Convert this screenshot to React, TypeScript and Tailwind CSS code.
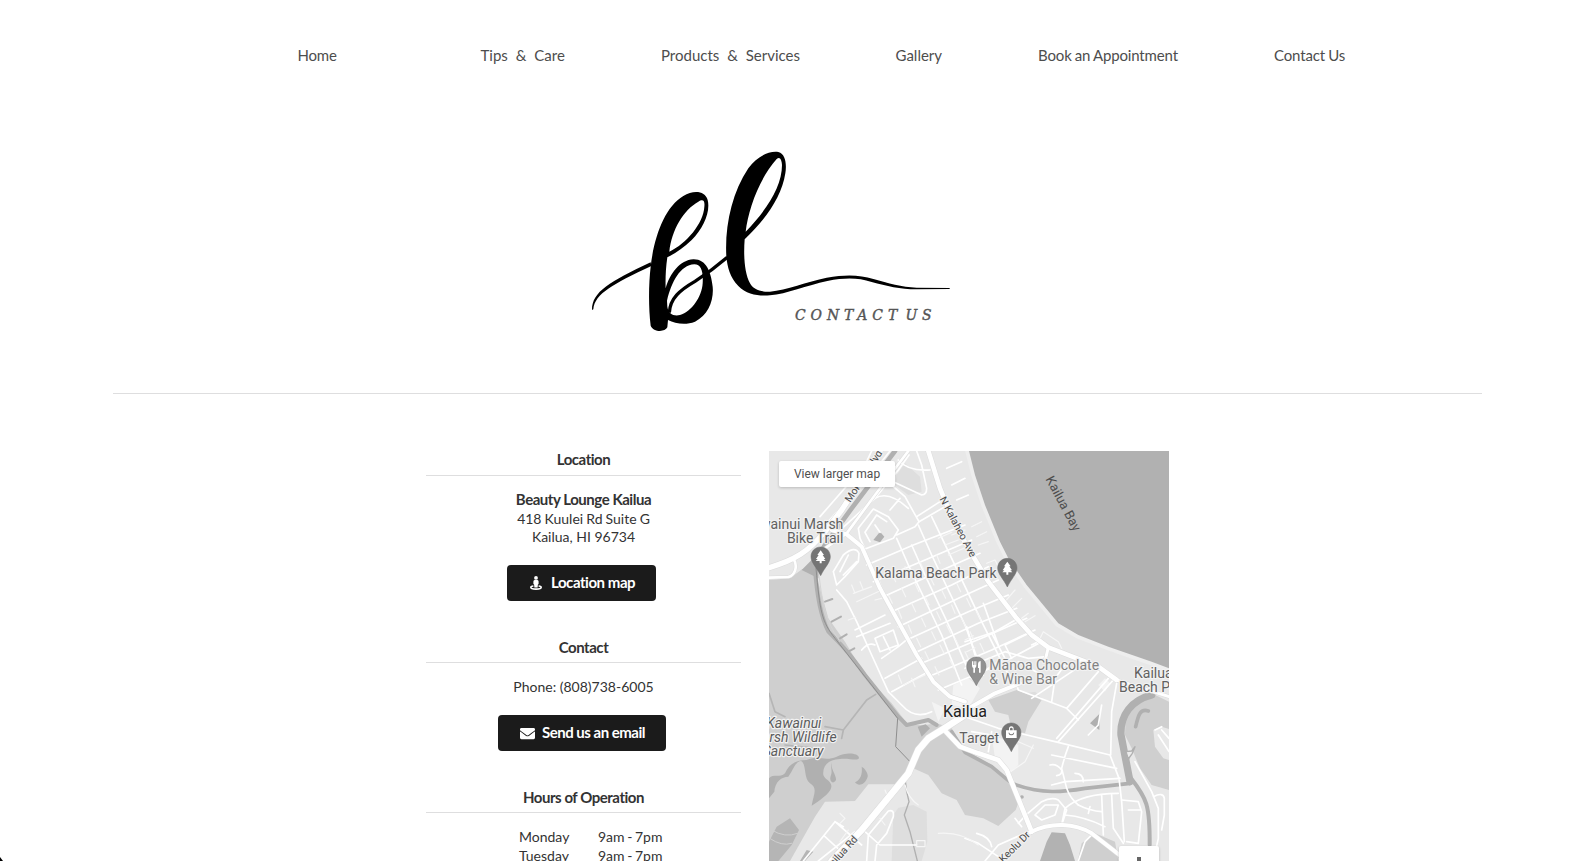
import React from "react";
import { FaEnvelope } from "react-icons/fa";

const BLOCKS: [string, string][] = [
  ["#dedede", "M395 90 L420 55 L465 95 L470 140 L430 150 L390 120Z M385 1110 L400 1088 L445 1080 L485 1100 L487 1190 L470 1248 L380 1248Z M750 750 L810 740 L830 760 L740 790Z"],
  ["#cfcfcf", "M12 405 L75 400 L112 372 L150 378 L165 430 L190 520 L240 590 L300 690 L380 775 L430 840 L480 840 L515 835 L560 850 L600 915 L680 960 L735 1020 L765 1060 L752 1095 L700 1143 L655 1120 L600 1110 L575 1065 L530 1045 L490 990 L445 970 L395 1018 L310 1018 L270 1068 L180 1070 L150 1115 L75 1248 L12 1248Z"],
  ["#cfcfcf", "M670 765 L755 735 L830 765 L790 830 L780 865 L740 855 L730 810 L690 800Z"],
  ["#cfcfcf", "M1212 770 L1160 745 L1110 760 L1082 810 L1080 870 L1100 910 L1125 970 L1160 1020 L1212 1035Z"],
  ["#e8e8e8", "M1165 855 L1190 845 L1212 852 L1212 945 L1195 940 L1170 905Z"],
  ["#cfcfcf", "M938 1248 L950 1195 L990 1165 L1050 1190 L1060 1248Z"],
  ["#b2b2b2", "M825 1248 L845 1190 L860 1162 L900 1165 L915 1200 L930 1248Z"],
  ["#b0b0b0", "M12 1000 C25 985 45 1000 60 985 C70 960 90 945 125 945 C160 930 180 950 215 935 C245 920 280 925 282 938 C280 950 250 938 225 942 C190 945 172 960 175 990 C180 1005 205 1010 198 1030 C195 1045 160 1070 140 1082 C145 1050 160 1030 135 1015 C115 1000 125 955 108 948 C90 950 85 975 70 995 C50 995 30 1010 28 1040 L12 1060Z M200 950 C195 970 215 990 213 1005 C205 1020 190 1010 198 990 C203 975 195 965 200 950Z M290 965 C300 970 310 985 308 995 C300 1020 280 1025 270 1012 C285 1005 293 990 290 965Z"],
  ["#b5b5b5", "M12 1190 L35 1145 L75 1120 L102 1155 L80 1200 L40 1248 L12 1248Z M105 1248 L125 1215 L145 1220 L120 1248Z"],
  ["#b0b0b0", "M110 375 L145 340 L165 355 L160 400Z M325 285 L345 260 L358 275 L345 292Z M458 845 L482 838 L495 850 L470 875Z M975 835 L1005 805 L1003 855Z"],
  ["#f3f3f3", "M565 720 L610 700 L645 730 L610 790 L560 780Z M680 870 L760 900 L760 960 L730 990 L690 940Z M1000 720 L1020 700 L1035 715 L1020 740Z M500 770 L540 790 L520 830Z"],
];

const WATER =
  "M612 18 L630 90 L660 180 L705 290 L730 340 L785 420 L880 535 L940 570 L1030 605 L1095 628 L1160 650 L1212 670 L1212 18Z";

const LANES = [
  // north-west neighbourhood
  "M165 215 L300 60 L320 18 M185 235 L330 75 L375 18 M215 265 L330 160 L400 75 L432 30 M400 45 Q430 80 495 75 M455 18 L470 60 L485 130 Q485 150 470 150 L380 108",
  "M280 250 L325 192 L370 215 L400 255 L385 280 L300 312 L285 280Z M300 262 L335 210 L365 230 M300 262 L315 290 M330 240 L345 262 M362 105 L420 155 L445 200 L462 230 L450 245 L395 270 M330 160 Q370 135 430 190 M375 195 L405 160",
  "M455 215 L525 170 M462 230 L540 185 M205 380 L235 330 Q270 300 282 325 L280 350 L240 395 L215 420 L205 380 M225 380 L250 330 M275 350 L235 390",
  "M305 360 L445 300 L600 240 M325 410 L480 345 L620 285 M355 455 L520 380 L645 325 M380 500 L560 420 L670 365 M400 545 L590 455 L700 405 M270 555 L360 510 M425 585 L610 500 L730 450 M275 575 L375 535 M447 625 L640 535 L755 490 M470 655 L660 575 L785 520 M490 695 L680 615 L810 555 M520 735 L700 660 L830 590",
  "M440 300 L480 390 L560 560 L620 700 M460 240 L500 330 L600 540 L655 690 M500 215 L560 340 L650 530 L710 650 M395 280 L430 360 L530 570 L590 720",
  "M215 435 L245 470 L275 530 L320 630 L370 740 L410 780 Q450 825 500 800 M330 580 L385 555 L400 600 L345 620Z M350 640 L400 605 L430 580 M360 700 L470 640 M380 740 L490 680 M290 615 Q310 590 330 600 M355 575 L375 615",
  // strip along the shore
  "M560 120 L600 100 M545 70 L590 50 M575 165 L610 150",
  "M605 545 L630 630 M655 475 L700 600 M680 565 L720 640 M720 600 L740 640 M800 600 L820 590 M600 590 L690 560 L760 520 M720 600 L800 560",
  // town centre and east side
  "M600 670 L720 620 L790 640 L845 635 M640 690 L700 650 L760 720 M755 720 L760 735 L905 790 L940 825 M900 660 L870 700 L860 770 M760 650 L830 690 M935 670 L800 760 M1000 680 L905 790 M1045 705 L880 890 M1030 700 L875 880 M1055 715 L1040 800 L1037 930 M1010 780 L1000 840 L970 870",
  "M600 815 L700 850 L870 890 L1035 930 L1062 1000 L1070 1070 L1078 1190 M910 905 Q900 930 890 970 L905 1030 Q915 1060 940 1080 M860 930 L1055 970 M860 1020 L900 1010 L1065 1000 M855 960 Q875 955 890 975 Q892 990 875 992 M930 985 Q955 985 955 1010 M620 860 L680 870 M670 920 L680 860",
  "M785 1108 L830 1070 Q860 1055 880 1065 L905 1095 L890 1140 M810 1110 L840 1080 L880 1080 L870 1110 L830 1125Z M890 1140 L900 1090 Q950 1045 1060 1045 M940 1080 Q975 1098 1010 1100 M900 1110 Q960 1115 1020 1145 M1010 1050 L1015 1170 M1040 1050 L1045 1150 L1075 1195 M1070 1065 L1120 1070 L1130 1100 L1120 1195 L1085 1190 M1090 1095 L1125 1095 M975 1085 L970 1105",
  "M1110 950 L1160 1040 L1180 1090 L1180 1180 L1165 1248 M1165 1055 Q1195 1040 1198 1060 L1198 1110 L1190 1155 M1190 855 L1212 880 M1170 855 L1190 845 M1212 920 L1180 870",
  "M785 1108 L760 1135 M600 1180 L640 1195 L700 1235 M635 1165 Q675 1175 680 1205 M750 1120 L770 1145 M660 1248 L700 1200 L790 1160 M940 1248 L960 1190 L985 1165",
  // south-west neighbourhood
  "M115 1248 L210 1130 L235 1145 M160 1248 L270 1160 M180 1175 L240 1230 M210 1130 L290 1200 M300 1160 L345 1200 L455 1200 M305 1248 L310 1170 L370 1098 Q388 1092 385 1115 L365 1165 L335 1200 L330 1248",
];

const PATHS =
  "M225 1105 L240 1120 L225 1135 M225 1190 L250 1155 M240 1200 L260 1170 M345 1120 L360 1140 M360 1035 L370 1060 M420 1020 Q430 1060 460 1080 M455 1200 L455 1187 L480 1187 L480 1205 L455 1205 M520 1165 Q590 1160 640 1200 M620 245 L650 230 M635 275 L665 260 M640 300 L670 290 M665 355 L690 345 L700 365 M720 470 L750 435 M740 490 L770 460 M770 520 L790 505 M780 530 L810 512 M820 590 L835 560 L880 590 L890 610 M730 985 L780 950 L805 900 M760 890 L805 910";

const TICKS =
  "M340 400 L350 425 M380 385 L392 410 M420 365 L430 390 M465 350 L475 372 M515 330 L525 355 M370 450 L382 475 M410 430 L422 455 M450 415 L462 440 M495 395 L507 420 M540 375 L550 400 M400 495 L410 520 M440 475 L452 500 M480 455 L492 480 M530 435 L542 460 M575 415 L587 440 M430 540 L440 565 M470 520 L482 545 M515 500 L527 525 M560 480 L570 505 M605 460 L617 485 M455 580 L467 605 M500 560 L512 585 M545 540 L557 565 M590 520 L602 545 M635 500 L647 525 M480 620 L492 645 M525 600 L537 625 M570 580 L582 605 M615 560 L627 585 M510 665 L522 690 M555 645 L567 670 M600 620 L612 645 M645 595 L657 620 M260 420 L270 445 M285 410 L295 435 M265 445 L320 425 M275 470 L350 435 M330 465 L350 460 M250 525 L272 517 M540 300 L580 285 M550 330 L600 308 M560 270 L600 255 M520 280 L560 262 M415 720 L480 690 M440 700 L450 725 M400 690 L410 715 M600 585 L625 572 M605 620 L630 608";

const MAJOR = [
  { w: 16, d: "M12 368 C90 345 130 320 180 260 L230 195 L345 18" },
  { w: 8, d: "M12 398 L70 396 C90 390 100 365 85 340 M430 18 L330 150 L245 265 L180 310" },
  { w: 12, d: "M200 255 L245 268 L290 305 L345 430 L455 630 L505 710 L555 755 L600 770" },
  { w: 14, d: "M490 18 L525 130 L570 240 L625 335 L670 410 L755 520 L800 570 L850 607 L1000 665 L1055 705" },
  { w: 9, d: "M850 607 L842 640 M1055 705 L1100 720 L1212 755" },
  { w: 20, d: "M200 1248 L290 1155 L430 985 L460 915 L490 880 L535 852 L600 810" },
  { w: 12, d: "M600 810 L620 785 L690 745 L765 715" },
  { w: 14, d: "M535 852 L585 905 L640 925 L700 945 L725 975 L800 1160" },
  { w: 12, d: "M795 1162 C860 1130 930 1135 980 1165 L1070 1235" },
];

function Pin({ x, y, fill, children }: { x: number; y: number; fill: string; children: React.ReactNode }) {
  return (
    <g transform={`translate(${x} ${y})`}>
      <path
        d="M0 -57 C17 -57 29 -44 29 -28 C29 -10 12 4 0 29 C-12 4 -29 -10 -29 -28 C-29 -44 -17 -57 0 -57Z"
        fill={fill}
        stroke="#6e6e6e"
        strokeWidth="1.5"
      />
      <g transform="translate(0 -28)" fill="#fff">
        {children}
      </g>
    </g>
  );
}

const TREE = "M0 -19 L10 -5 L6 -5 L14 7 L9 7 L15 13 L3 13 L3 20 L-3 20 L-3 13 L-15 13 L-9 7 L-14 7 L-6 -5 L-10 -5Z";

const halo = "[paint-order:stroke] stroke-[#f2f2f2] stroke-[7px] [stroke-linejoin:round]";

function MapView() {
  return (
    <div className="relative h-[450px] w-[400px] shrink-0 overflow-hidden bg-[#e8e8e8]">
      <svg width="400" height="410" viewBox="12 18 1200 1230" className="block font-[Roboto,sans-serif]">
        {BLOCKS.map(([fill, d], i) => (
          <path key={i} d={d} fill={fill} />
        ))}
        <path d={WATER} fill="#b1b1b1" stroke="#eeeeee" strokeWidth="22" strokeLinejoin="round" />
        <path d={WATER} fill="#b1b1b1" />
        <g fill="none" strokeLinecap="round" strokeLinejoin="round">
          <path d="M390 18 L260 190 L180 300 L145 360" stroke="#b0b0b0" strokeWidth="14" />
          <path d="M150 370 C155 450 165 510 190 560 C230 600 250 620 300 690 L400 815 L425 840 L490 825 L515 840" stroke="#b0b0b0" strokeWidth="12" />
          <path d="M153 370 C165 500 170 530 210 580 L398 820 L392 905 L435 950 L430 970" stroke="#8e8e8e" strokeWidth="3" />
          <path d="M160 370 C172 495 190 540 225 590" stroke="#d5d5d5" strokeWidth="3" />
          <path d="M180 470 L202 462 M200 530 L228 515 M225 580 L245 568 M250 620 L268 610" stroke="#b0b0b0" strokeWidth="6" />
          <path d="M332 748 L305 765 L235 855 L180 845 M12 745 L30 800 L60 815 M235 855 L230 880 M60 900 L155 910" stroke="#b5b5b5" strokeWidth="5" />
          <path d="M418 985 L425 1040 L432 1070 L418 1110 L435 1160 L457 1248" stroke="#b0b0b0" strokeWidth="4" />
          <path d="M560 860 L600 922 L680 965 L740 1015 C830 1050 900 1040 960 1030 L1095 1015" stroke="#b0b0b0" strokeWidth="11" />
          <path d="M1160 750 C1100 765 1065 810 1068 870 L1095 1010" stroke="#b0b0b0" strokeWidth="22" />
          <path d="M1098 1000 C1145 1060 1155 1080 1154 1200" stroke="#b0b0b0" strokeWidth="12" />
          <path d="M1150 798 C1125 790 1120 810 1112 845 M770 1056 l1 0" stroke="#b0b0b0" strokeWidth="11" />
          <path d="M1083 920 L1100 918 L1110 905 L1102 925 L1090 942Z" stroke="#b0b0b0" strokeWidth="4" fill="#ececec" />
          <path d="M20 1155 Q60 1180 98 1165 M14 1180 Q50 1205 80 1195" stroke="#cfcfcf" strokeWidth="3" />
          {LANES.map((d, i) => (
            <path key={i} d={d} stroke="#fff" strokeWidth="5" />
          ))}
          <path d={PATHS} stroke="#f6f6f6" strokeWidth="3.5" />
          <path d={TICKS} stroke="#f6f6f6" strokeWidth="3.5" />
          {MAJOR.map((r, i) => (
            <path key={i} d={r.d} stroke="#dcdcdc" strokeWidth={r.w + 3} />
          ))}
          {MAJOR.map((r, i) => (
            <path key={i} d={r.d} stroke="#fff" strokeWidth={r.w} />
          ))}
        </g>
        <g fill="#616161" fontSize="42">
          <text x="235" y="252" textAnchor="end" className={halo}>Kawainui Marsh</text>
          <text x="235" y="294" textAnchor="end" className={halo}>Bike Trail</text>
          <text x="331" y="399" className={halo}>Kalama Beach Park</text>
          <text x="583" y="894" className={halo}>Target</text>
          <text x="1107" y="699" className={halo}>Kailua</text>
          <text x="1062" y="741" className={halo}>Beach Park</text>
          <g fill="#828282">
            <text x="673" y="675" className={halo}>Mānoa Chocolate</text>
            <text x="673" y="717" className={halo}>&amp; Wine Bar</text>
          </g>
          <g fontStyle="italic" fill="#5c5c5c">
            <text x="4" y="849" className={halo}>Kawainui</text>
            <text x="215" y="891" textAnchor="end" className={halo}>Marsh Wildlife</text>
            <text x="175" y="933" textAnchor="end" className={halo}>Sanctuary</text>
          </g>
        </g>
        <text x="534" y="817" fontSize="48" fill="#222" className={halo}>Kailua</text>
        <g fontSize="31" fill="#4a4a4a">
          <text transform="translate(256 174) rotate(-57)" className={halo}>Mokapu Blvd</text>
          <text transform="translate(523 162) rotate(62)" className={halo}>N Kalaheo Ave</text>
          <text transform="translate(193 1280) rotate(-48)" className={halo}>Kailua Rd</text>
          <text transform="translate(715 1254) rotate(-45)" className={halo}>Keolu Dr</text>
        </g>
        <text transform="translate(841 102) rotate(62)" fontSize="39" fill="#4d4d4d">Kailua Bay</text>
        <Pin x={167} y={363} fill="#757575"><path d={TREE} /></Pin>
        <Pin x={727} y={397} fill="#757575"><path d={TREE} /></Pin>
        <Pin x={634} y={693} fill="#919191">
          <path d="M-13 -16 h3 v11 h2 v-11 h3 v11 h2 v-11 h3 v13 q0 6 -4 7 v14 h-5 v-14 q-4 -1 -4 -7Z M5 -9 q0 -7 8 -8 v35 h-5 v-14 h-3Z" />
        </Pin>
        <Pin x={739} y={891} fill="#757575">
          <path fillRule="evenodd" d="M-16 -7 h9 v-4 q0 -8 7 -8 q7 0 7 8 v4 h9 v23 h-32Z M-4 -7 h8 v-4 q0 -4 -4 -4 q-4 0 -4 4Z M-9 0 q2 8 9 8 q7 0 9 -8 h-3 q-1 5 -6 5 q-5 0 -6 -5Z" />
        </Pin>
      </svg>
      <a className="absolute left-[10px] top-[10px] flex h-[26px] w-[116px] items-center justify-center rounded-[2px] bg-white font-[Roboto,sans-serif] text-[12px] text-[#4f4f4f] shadow-[0_1px_3px_rgba(0,0,0,0.2)]">
        View larger map
      </a>
      <div className="absolute left-[350px] top-[395px] flex h-20 w-10 justify-center rounded-[2px] bg-white pt-[11px] shadow-[0_1px_3px_rgba(0,0,0,0.2)]">
        <span className="h-4 w-1 bg-[#666]" />
      </div>
    </div>
  );
}

function Logo() {
  return (
    <svg width="390" height="210" viewBox="0 0 1170 630" className="block">
      <path d="M36 510 C36 455 90 425 212 367 L214 378 C100 432 45 460 40 508Z" />
      <path
        fillRule="evenodd"
        d="M212 557 C205 500 206 430 212 380 C222 290 255 200 310 168 C340 150 375 152 383 180 C392 215 370 265 335 300 C310 325 285 340 262 352 C257 385 256 420 257 445 C270 400 300 360 340 358 C378 357 393 395 398 440 C402 480 385 525 345 545 C315 557 285 550 264 540 L262 562 C255 577 220 577 212 557Z M268 335 C275 270 310 210 355 185 C370 176 375 183 373 200 C370 250 320 310 268 335Z M261 482 C275 425 300 376 343 373 C364 373 370 395 368 430 C366 470 335 515 300 525 C280 530 265 520 262 500Z"
      />
      <path d="M442 352 C400 388 380 402 345 424 C300 450 270 475 268 518" fill="none" stroke="#000" strokeWidth="10" />
      <path
        fillRule="evenodd"
        d="M439 350 C434 260 455 160 505 85 C530 50 565 32 595 36 C618 42 620 75 616 100 C605 170 560 235 494 298 C490 350 494 400 510 430 C520 448 540 456 570 455 C620 450 680 425 740 413 C800 403 840 405 880 417 C925 430 965 441 1010 443 L1109 444 L1109 447 L1010 448 C960 448 920 438 875 426 C835 414 800 412 742 423 C680 436 620 462 570 466 C540 469 500 465 475 438 C450 412 442 380 439 350Z M497 275 C505 210 535 120 590 57 C600 48 605 60 606 75 C606 140 560 210 497 275Z"
      />
    </svg>
  );
}

function StreetView() {
  return (
    <svg width="12" height="14" viewBox="0 0 12 14" fill="#fff" className="mr-[9px]">
      <circle cx="6" cy="1.9" r="1.9" />
      <path d="M4.6 4 H7.4 Q8.6 4.2 8.6 5.4 V8 L7.9 8.6 L7.6 11.4 H4.4 L4.1 8.6 L3.4 8 V5.4 Q3.4 4.2 4.6 4Z" />
      <path
        d="M3.4 10 C1.6 10.2 .8 10.7 .8 11.3 C.8 12.4 3.2 13.1 6 13.1 C8.8 13.1 11.2 12.4 11.2 11.3 C11.2 10.7 10.4 10.2 8.6 10"
        fill="none"
        stroke="#fff"
        strokeWidth="1.6"
      />
    </svg>
  );
}

function Heading({ children, className }: { children: React.ReactNode; className: string }) {
  return (
    <h4 className={`h-[25px] border-b border-[#dededf] text-center text-[15px] font-bold tracking-[-0.46px] text-[#333] ${className}`}>
      {children}
    </h4>
  );
}

const NAV_ITEMS = [
  { label: "Home", cls: "w-[183px] tracking-[-0.2px]" },
  { label: "Tips \u00a0&\u00a0 Care", cls: "w-[180.5px] [word-spacing:0.1px]" },
  { label: "Products \u00a0&\u00a0 Services", cls: "w-[234.5px] [word-spacing:0.1px]" },
  { label: "Gallery", cls: "w-[142.5px]" },
  { label: "Book an Appointment", cls: "w-[236px] tracking-[-0.14px] [word-spacing:-0.6px]" },
  { label: "Contact Us", cls: "tracking-[-0.14px] [word-spacing:-0.6px]" },
];

export default function App() {
  return (
    <div className="relative h-screen overflow-hidden bg-white font-[Lato,sans-serif] text-[#333]">
      <nav className="flex h-[112px] whitespace-pre pl-[297.5px] pt-[45px] text-[15px] leading-[20px] text-[#4d4d4d]">
        {NAV_ITEMS.map((n) => (
          <a key={n.label} className={n.cls}>
            {n.label}
          </a>
        ))}
      </nav>
      <header className="relative ml-[580px] mt-[28px] h-[210px] w-[390px]">
        <Logo />
        <h1 className="absolute left-[215px] top-[165px] whitespace-nowrap font-['DejaVu_Serif_Condensed','DejaVu_Serif',serif] text-[15.5px] italic leading-[20px] tracking-[4.9px] text-[#555] [-webkit-text-stroke:0.4px_#555] [word-spacing:-6px]">
          CONTACT US
        </h1>
      </header>
      <hr className="ml-[113px] mt-[43px] w-[1369px] border-t border-[#dededf]" />
      <main className="mt-[57px] flex">
        <section className="ml-[426px] mr-7 w-[315px] text-[14px] leading-[18px]">
          <Heading className="leading-[16px]">Location</Heading>
          <div className="mt-[14px] text-center">
            <p className="mb-px text-[15px] font-bold leading-[19px] tracking-[-0.46px]">Beauty Lounge Kailua</p>
            <p className="[word-spacing:-0.5px]">418 Kuulei Rd Suite G</p>
            <p>Kailua, HI 96734</p>
          </div>
          <a className="ml-[81px] mt-[19px] flex h-9 w-[149px] items-center rounded bg-[#1b1b1b] pl-[23px] text-[15px] font-bold tracking-[-0.45px] text-white">
            <StreetView />
            <span className="pb-0.5">Location map</span>
          </a>
          <Heading className="mt-[37px] leading-[18px]">Contact</Heading>
          <p className="mt-[15px] text-center">Phone: (808)738-6005</p>
          <a className="ml-[72px] mt-[19px] flex h-9 w-[168px] items-center rounded bg-[#1b1b1b] pl-[22px] text-[15px] font-bold tracking-[-0.5px] text-white">
            <FaEnvelope className="mr-[7px] size-[15px]" />
            <span className="pb-0.5">Send us an email</span>
          </a>
          <Heading className="mt-[37px] leading-[18px]">Hours of Operation</Heading>
          <div className="ml-[93px] mt-[14px] grid grid-cols-[79px_auto] leading-[19px] [word-spacing:-1px]">
            <span>Monday</span>
            <span>9am - 7pm</span>
            <span>Tuesday</span>
            <span>9am - 7pm</span>
          </div>
        </section>
        <MapView />
      </main>
      <svg width="3" height="4" viewBox="0 0 3 4" className="absolute bottom-0 left-0">
        <path d="M0 0 L3 4 L0 4Z" />
      </svg>
    </div>
  );
}
